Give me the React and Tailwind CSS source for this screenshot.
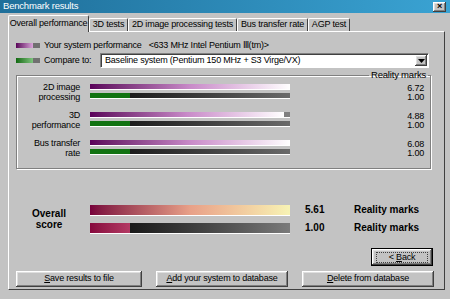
import React from "react";

const raised =
  "shadow-[inset_-1px_-1px_0_#404040,inset_1px_1px_0_#ffffff,inset_-2px_-2px_0_#808080,inset_2px_2px_0_#dfdfdf]";

function WinButton({ children, className = "" }) {
  return (
    <button
      className={`h-[16px] bg-[#c3c3c3] text-[9px] text-black ${raised} ${className}`}
    >
      {children}
    </button>
  );
}

function Tab({ label, width, active }) {
  if (active) {
    return (
      <div
        className={`${width} h-[17px] -mb-[1px] z-10 relative bg-[#c3c3c3] border-t border-l border-white border-r border-r-[#404040] rounded-t-[2px] flex items-center justify-center`}
      >
        {label}
      </div>
    );
  }
  return (
    <div
      className={`${width} h-[13px] bg-[#c3c3c3] border-t border-l border-white border-r border-r-[#404040] rounded-t-[2px] flex items-center justify-center`}
    >
      {label}
    </div>
  );
}

const rows = [
  { label: ["2D image", "processing"], value: "6.72", fill: 100 },
  { label: ["3D", "performance"], value: "4.88", fill: 97 },
  { label: ["Bus transfer", "rate"], value: "6.08", fill: 100 },
];

function MarkRow({ row }) {
  return (
    <div className="flex">
      <div className="w-[63px] text-right leading-[10px]">
        <div>{row.label[0]}</div>
        <div>{row.label[1]}</div>
      </div>
      <div className="ml-[10px] w-[200px] flex flex-col gap-[4px] pt-[2px]">
        <div className="h-[5px] bg-[#808080] flex shadow-[0_1px_0_#ffffff]">
          <div
            className="h-full bg-gradient-to-r from-[#5a005a] via-[#c88ac8] to-[#ffffff]"
            style={{ width: `${row.fill}%` }}
          />
        </div>
        <div className="h-[5px] flex shadow-[0_1px_0_#ffffff]">
          <div className="w-[40px] h-full bg-[#127312]" />
          <div className="flex-1 h-full bg-gradient-to-r from-[#1c1c1c] to-[#6a6a6a]" />
        </div>
      </div>
      <div className="ml-auto mr-[6px] text-right leading-[9px] pt-[2px]">
        <div>{row.value}</div>
        <div>1.00</div>
      </div>
    </div>
  );
}

export default function App() {
  return (
    <div className="w-[450px] h-[299px] bg-[#c3c3c3] overflow-hidden font-['Liberation_Sans',Arial,sans-serif] text-[9px] text-black tracking-[-0.2px] flex flex-col">
      {/* Title bar */}
      <div className="h-[13px] bg-gradient-to-r from-[#1f6f9a] to-[#3aa3d3] flex items-center pl-[3px] pr-[4px]">
        <span className="text-white text-[9.5px]">Benchmark results</span>
        <div
          className={`ml-auto w-[13px] h-[10px] bg-[#c3c3c3] flex items-center justify-center text-[9px] font-bold leading-none ${raised}`}
        >
          ×
        </div>
      </div>

      {/* Tabs */}
      <div className="flex items-end pl-[8px] mt-[2px]">
        <Tab label="Overall performance" width="w-[81px]" active />
        <Tab label="3D tests" width="w-[39px]" />
        <Tab label="2D image processing tests" width="w-[109px]" />
        <Tab label="Bus transfer rate" width="w-[71px]" />
        <Tab label="AGP test" width="w-[42px]" />
      </div>

      {/* Panel */}
      <div className="ml-[8px] w-[437px] h-[259px] border-t border-l border-white border-r border-b border-r-[#404040] border-b-[#404040] flex flex-col px-[7px] pt-[8px]">
        {/* Legend */}
        <div className="flex items-center h-[11px]">
          <div className="w-[24px] h-[5px] flex">
            <div className="w-[17px] h-full bg-gradient-to-r from-[#5a005a] to-[#d9a4d9]" />
            <div className="flex-1 h-full bg-[#707070]" />
          </div>
          <span className="ml-[4px]">Your system performance</span>
          <span className="ml-[7px]">&lt;633 MHz Intel Pentium Ⅲ(tm)&gt;</span>
        </div>
        <div className="flex items-center mt-[2px] h-[15px]">
          <div className="w-[24px] h-[5px] flex">
            <div className="w-[17px] h-full bg-gradient-to-r from-[#0f6a0f] to-[#7dc47d]" />
            <div className="flex-1 h-full bg-[#707070]" />
          </div>
          <span className="ml-[4px]">Compare to:</span>
          <div className="ml-auto mr-[8px] w-[329px] h-[15px] bg-white border-t border-l border-[#808080] border-r border-b border-r-white border-b-white shadow-[inset_1px_1px_0_#404040] flex items-center pl-[4px]">
            <span>Baseline system (Pentium 150 MHz + S3 Virge/VX)</span>
            <div
              className={`ml-auto mr-[1px] w-[12px] h-[11px] bg-[#c3c3c3] flex items-center justify-center ${raised}`}
            >
              <svg width="7" height="4" viewBox="0 0 7 4">
                <path d="M0 0h7L3.5 4z" fill="#000" />
              </svg>
            </div>
          </div>
        </div>

        {/* Reality marks group */}
        <fieldset className="mt-[2px] mr-[6px] border border-[#808080] shadow-[1px_1px_0_#ffffff,inset_1px_1px_0_#ffffff] px-0 pt-[2px] pb-[10px] flex flex-col gap-[8px] min-w-0">
          <legend className="ml-auto mr-[2px] px-[2px] leading-[10px] text-[9.5px]">
            Reality marks
          </legend>
          {rows.map((r) => (
            <MarkRow key={r.label[0]} row={r} />
          ))}
        </fieldset>

        {/* Overall score */}
        <div className="flex items-center mt-[36px]">
          <div className="w-[66px] text-center font-bold text-[10px] leading-[11px] tracking-[0px]">
            <div>Overall</div>
            <div>score</div>
          </div>
          <div className="ml-[8px] w-[200px] flex flex-col gap-[8px]">
            <div className="h-[10px] bg-gradient-to-r from-[#78003c] via-[#e8a088] to-[#f7f3b4] shadow-[0_1px_0_#ffffff]" />
            <div className="h-[10px] flex shadow-[0_1px_0_#ffffff]">
              <div className="w-[40px] h-full bg-gradient-to-r from-[#86083e] to-[#b43a64]" />
              <div className="flex-1 h-full bg-gradient-to-r from-[#1a1a1a] to-[#7a7a7a]" />
            </div>
          </div>
          <div className="ml-[15px] flex flex-col gap-[8px] font-bold text-[10px] leading-[10px] tracking-[0px]">
            <div className="flex">
              <span className="w-[49px]">5.61</span>
              <span>Reality marks</span>
            </div>
            <div className="flex">
              <span className="w-[49px]">1.00</span>
              <span>Reality marks</span>
            </div>
          </div>
        </div>

        {/* Back */}
        <div className="flex justify-end mt-[15px] mr-[4px]">
          <div className="border border-black">
            <WinButton className="w-[60px] h-[14px] flex items-center justify-center">
              <span className="border border-dotted border-[#404040] px-[12px] leading-[9px]">
                &lt; <u>B</u>ack
              </span>
            </WinButton>
          </div>
        </div>

        {/* Buttons */}
        <div className="flex mt-[5px] gap-[14px]">
          <WinButton className="w-[126px]">
            <u>S</u>ave results to file
          </WinButton>
          <WinButton className="w-[132px]">
            <u>A</u>dd your system to database
          </WinButton>
          <WinButton className="w-[132px]">
            <u>D</u>elete from database
          </WinButton>
        </div>
      </div>
    </div>
  );
}
